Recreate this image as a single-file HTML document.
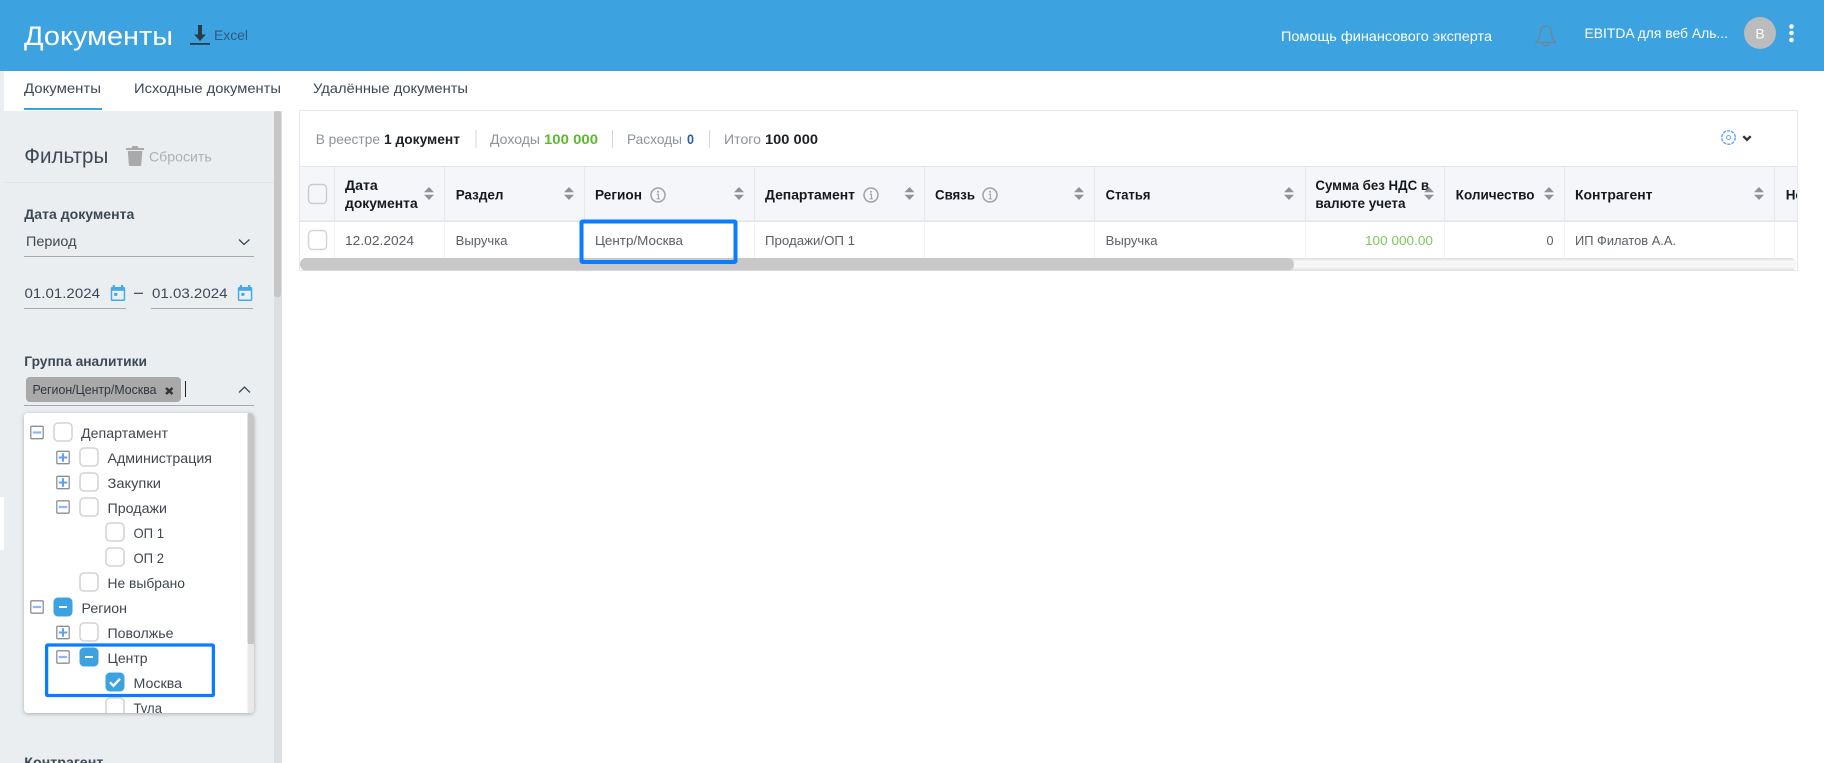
<!DOCTYPE html>
<html lang="ru">
<head>
<meta charset="utf-8">
<title>Документы</title>
<style>
html,body{margin:0;padding:0;width:1824px;height:763px;overflow:hidden;background:#fff}
svg{display:block}
text{font-family:"Liberation Sans",sans-serif;white-space:pre}
.t14{font-size:14px;fill:#3d4855}
.m{font-size:14px;fill:#3d4855;font-weight:700}
.h{font-size:13.5px;fill:#15181c;font-weight:700}
.c{font-size:13px;fill:#5a6068}
.s{font-size:14px;fill:#8d939a}
.b{font-size:14px;fill:#1c2126;font-weight:700}
.r{font-size:14px;fill:#3f4751}
</style>
</head>
<body>
<svg width="1824" height="763" viewBox="0 0 1824 763" xmlns="http://www.w3.org/2000/svg">
<defs>
<linearGradient id="trk" x1="0" y1="0" x2="0" y2="1"><stop offset="0" stop-color="#dcdcdc"/><stop offset=".25" stop-color="#f6f6f6"/><stop offset=".75" stop-color="#f6f6f6"/><stop offset="1" stop-color="#dcdcdc"/></linearGradient>
<g id="sort"><path d="M-5 -1.200 L0 -6.500 L5 -1.200 Z M-5 1.200 L0 6.500 L5 1.200 Z" fill="#8f929b"/></g>
<g id="info"><circle r="7" fill="none" stroke="#a0a2a6" stroke-width="1.500"/><circle cy="-3.300" r="1" fill="#a0a2a6"/><path d="M-1.200 -0.800H0.400V3.600M-1.300 3.800H1.800" fill="none" stroke="#a0a2a6" stroke-width="1.100"/></g>
<g id="cb"><rect x="-9" y="-9" width="18" height="18" rx="4" fill="#fff" stroke="#d4d4d4" stroke-width="1.600"/></g>
<g id="cbm"><rect x="-9.500" y="-9.500" width="19" height="19" rx="4.500" fill="#3ca3e0"/><path d="M-4 0H4" stroke="#fff" stroke-width="2"/></g>
<g id="cbc"><rect x="-9.500" y="-9.500" width="19" height="19" rx="4.500" fill="#3ca3e0"/><path d="M-5 0.300L-1.500 3.800L5 -3.200" fill="none" stroke="#fff" stroke-width="2.400"/></g>
<g id="exm"><rect x="-6.200" y="-6.200" width="12.400" height="12.400" rx="1" fill="#fff" stroke="#8a8f99" stroke-width="1.300"/><path d="M-4.200 0H4.200" stroke="#8ab6ff" stroke-width="2.200"/></g>
<g id="exp"><rect x="-6.200" y="-6.200" width="12.400" height="12.400" rx="1" fill="#fff" stroke="#8a8f99" stroke-width="1.300"/><path d="M-4.200 0H4.200M0 -4.200V4.200" stroke="#5f9dfb" stroke-width="2"/></g>
<g id="cal"><path d="M0 3.500a1.500 1.500 0 0 1 1.500-1.500H2V0h2.200v2h6.100V0h2.200v2h.5A1.500 1.500 0 0 1 14.500 3.500V14.500A1.500 1.500 0 0 1 13 16H1.500A1.500 1.500 0 0 1 0 14.500Z" fill="#4aa8e4"/><rect x="1.500" y="5.800" width="11.500" height="8.700" fill="#e6f1f8"/><rect x="3.600" y="8" width="3" height="2.800" fill="#3ca3e0"/></g>
<clipPath id="dd"><rect x="24" y="413" width="230" height="300" rx="4"/></clipPath>
<clipPath id="tb2"><rect x="300" y="111" width="1497" height="160"/></clipPath>
<filter id="sh" x="-10%" y="-10%" width="120%" height="120%"><feDropShadow dx="0" dy="1" stdDeviation="2" flood-color="#000" flood-opacity=".28"/></filter>
</defs>

<!-- header -->
<rect width="1824" height="71" fill="#3ca3e0"/>
<text x="24" y="45" font-size="27" fill="#fff" textLength="149" lengthAdjust="spacingAndGlyphs">Документы</text>
<path d="M198 25H202V34.500H205.800L200 41L194.200 34.500H198Z" fill="#2b3a47"/>
<rect x="190" y="43" width="20" height="1.800" fill="#2b3a47"/>
<text x="214" y="40" font-size="14" fill="#2f5a80" textLength="34" lengthAdjust="spacingAndGlyphs">Excel</text>
<text x="1281" y="41" font-size="14" fill="#fff" textLength="211" lengthAdjust="spacingAndGlyphs">Помощь финансового эксперта</text>
<path d="M1535.800 42.300C1539.500 39.500 1540.300 36 1540.300 33C1540.300 28.300 1542.500 25.800 1545.800 25.800C1549.100 25.800 1551.300 28.300 1551.300 33C1551.300 36 1552.100 39.500 1555.800 42.300ZM1542.700 42.800a3.100 3.100 0 0 0 6.200 0" fill="none" stroke="#76838f" stroke-width="1.200"/>
<text x="1584.500" y="38" font-size="14" fill="#fff" textLength="143.500" lengthAdjust="spacingAndGlyphs">EBITDA для веб Аль...</text>
<circle cx="1760" cy="33" r="16" fill="#bcbcbe"/>
<text x="1760" y="38.500" font-size="14" fill="#fff" text-anchor="middle">В</text>
<circle cx="1791.500" cy="26.500" r="2.300" fill="#fff"/><circle cx="1791.500" cy="33" r="2.300" fill="#fff"/><circle cx="1791.500" cy="40" r="2.300" fill="#fff"/>

<!-- tabs -->
<rect x="0" y="71" width="4" height="40" fill="#ebeef1"/>
<text x="24" y="93" class="t14" textLength="77" lengthAdjust="spacingAndGlyphs">Документы</text>
<text x="134" y="93" class="t14" textLength="147" lengthAdjust="spacingAndGlyphs">Исходные документы</text>
<text x="313" y="93" class="t14" textLength="155" lengthAdjust="spacingAndGlyphs">Удалённые документы</text>
<rect x="24" y="108" width="78" height="2" fill="#3ca3e0"/>

<!-- sidebar -->
<rect x="0" y="111" width="282" height="652" fill="#ebeef1"/>
<rect x="0" y="497" width="4" height="53" fill="#fff"/>
<rect x="274" y="111" width="8" height="652" fill="#dcdfe1"/>
<rect x="274" y="111" width="7" height="186" rx="3" fill="#c6c6c6"/>
<text x="24.300" y="163" font-size="21" fill="#3d4855" textLength="84" lengthAdjust="spacingAndGlyphs">Фильтры</text>
<path d="M126 148H131.500L132.500 146H137.500L138.500 148H144V150H126ZM127.800 151H142.300L141.300 164.500A1.500 1.500 0 0 1 139.800 166H130.300A1.500 1.500 0 0 1 128.800 164.500Z" fill="#a9a9a9"/>
<text x="149" y="161.500" font-size="14" fill="#acb0b4" textLength="62.700" lengthAdjust="spacingAndGlyphs">Сбросить</text>
<rect x="4" y="182" width="270" height="1" fill="#e2e5e8"/>
<text x="24.300" y="219" class="m" textLength="110" lengthAdjust="spacingAndGlyphs">Дата документа</text>
<text x="26" y="246" class="t14" textLength="50.500" lengthAdjust="spacingAndGlyphs">Период</text>
<path d="M239 239.500L244 244.500L249.500 239.500" fill="none" stroke="#3d4855" stroke-width="1.300"/>
<rect x="24" y="256" width="230" height="1" fill="#a8a9ab"/>
<text x="24.500" y="298" class="t14" textLength="75.500" lengthAdjust="spacingAndGlyphs">01.01.2024</text>
<use href="#cal" x="110.700" y="285"/>
<rect x="134" y="292.700" width="9" height="1.200" fill="#3d4855"/>
<text x="152" y="298" class="t14" textLength="75.500" lengthAdjust="spacingAndGlyphs">01.03.2024</text>
<use href="#cal" x="237.800" y="285"/>
<rect x="24" y="308" width="102" height="1" fill="#a8a9ab"/>
<rect x="151" y="308" width="102" height="1" fill="#a8a9ab"/>
<text x="24.300" y="366" class="m" textLength="122.700" lengthAdjust="spacingAndGlyphs">Группа аналитики</text>
<rect x="26" y="377" width="155" height="25" rx="4" fill="#a9a9a9"/>
<text x="32.500" y="394" font-size="12.500" fill="#2f3740" textLength="124" lengthAdjust="spacingAndGlyphs">Регион/Центр/Москва</text>
<path d="M166 388L172.500 394M172.500 388L166 394" stroke="#333" stroke-width="2.500"/>
<rect x="185" y="381" width="1" height="16" fill="#222"/>
<path d="M239 392.500L244.500 387L250 392.500" fill="none" stroke="#3d4855" stroke-width="1.300"/>
<rect x="24" y="405" width="230" height="1" fill="#a8a9ab"/>

<!-- dropdown -->
<rect x="24" y="413" width="230" height="300" rx="4" fill="#fff" filter="url(#sh)"/>
<g clip-path="url(#dd)">
<rect x="247.500" y="413" width="7" height="300" fill="#e9e9e9"/>
<rect x="247.500" y="413" width="7" height="231" rx="2" fill="#c6c6c6"/>
<use href="#exm" x="37" y="432.500"/><use href="#cb" x="63" y="432"/>
<text x="81" y="438" class="r" textLength="87" lengthAdjust="spacingAndGlyphs">Департамент</text>
<use href="#exp" x="63" y="457.500"/><use href="#cb" x="89" y="457"/>
<text x="107.500" y="463" class="r" textLength="104.500" lengthAdjust="spacingAndGlyphs">Администрация</text>
<use href="#exp" x="63" y="482.500"/><use href="#cb" x="89" y="482"/>
<text x="107.500" y="488" class="r" textLength="53.500" lengthAdjust="spacingAndGlyphs">Закупки</text>
<use href="#exm" x="63" y="507"/><use href="#cb" x="89" y="507"/>
<text x="107.500" y="513" class="r" textLength="59.500" lengthAdjust="spacingAndGlyphs">Продажи</text>
<use href="#cb" x="115" y="532"/>
<text x="133.500" y="538" class="r" textLength="30.500" lengthAdjust="spacingAndGlyphs">ОП 1</text>
<use href="#cb" x="115" y="557"/>
<text x="133.500" y="563" class="r" textLength="30.500" lengthAdjust="spacingAndGlyphs">ОП 2</text>
<use href="#cb" x="89" y="582"/>
<text x="107.500" y="588" class="r" textLength="77.500" lengthAdjust="spacingAndGlyphs">Не выбрано</text>
<use href="#exm" x="37" y="607"/><use href="#cbm" x="63" y="607"/>
<text x="81.500" y="613" class="r" textLength="45.500" lengthAdjust="spacingAndGlyphs">Регион</text>
<use href="#exp" x="63" y="632.500"/><use href="#cb" x="89" y="632"/>
<text x="107.500" y="638" class="r" textLength="66" lengthAdjust="spacingAndGlyphs">Поволжье</text>
<use href="#exm" x="63" y="657"/><use href="#cbm" x="89" y="657"/>
<text x="107.500" y="663" class="r" textLength="40" lengthAdjust="spacingAndGlyphs">Центр</text>
<use href="#cbc" x="115" y="682"/>
<text x="133.500" y="688" class="r" textLength="48.500" lengthAdjust="spacingAndGlyphs">Москва</text>
<use href="#cb" x="115" y="707"/>
<text x="133.500" y="713" class="r" textLength="28.500" lengthAdjust="spacingAndGlyphs">Тула</text>
</g>
<rect x="46.600" y="645" width="166.800" height="50.500" rx="1" fill="none" stroke="#0a7cff" stroke-width="3.300"/>
<text x="24.300" y="767" class="m" textLength="79" lengthAdjust="spacingAndGlyphs">Контрагент</text>

<!-- registry -->
<rect x="299.500" y="110.500" width="1498" height="160" fill="#fff" stroke="#e5e7ea"/>
<text x="315.700" y="144" class="s" textLength="64.300" lengthAdjust="spacingAndGlyphs">В реестре</text>
<text x="384" y="144" class="b" textLength="76" lengthAdjust="spacingAndGlyphs">1 документ</text>
<rect x="475.500" y="130" width="1" height="18" fill="#d5d7da"/>
<text x="490" y="144" class="s" textLength="50" lengthAdjust="spacingAndGlyphs">Доходы</text>
<text x="544" y="144" font-size="14" font-weight="700" fill="#5cb82e" textLength="54" lengthAdjust="spacingAndGlyphs">100 000</text>
<rect x="612" y="130" width="1" height="18" fill="#d5d7da"/>
<text x="627" y="144" class="s" textLength="55" lengthAdjust="spacingAndGlyphs">Расходы</text>
<text x="687" y="144" font-size="14" font-weight="700" fill="#2c5da8" textLength="7" lengthAdjust="spacingAndGlyphs">0</text>
<rect x="709" y="130" width="1" height="18" fill="#d5d7da"/>
<text x="724" y="144" class="s" textLength="37" lengthAdjust="spacingAndGlyphs">Итого</text>
<text x="765" y="144" class="b" textLength="53" lengthAdjust="spacingAndGlyphs">100 000</text>

<circle cx="1728.500" cy="137.500" r="6.800" fill="none" stroke="#6aa6ff" stroke-width="1.500" stroke-dasharray="3.300 1"/>
<circle cx="1728.500" cy="137.500" r="2" fill="none" stroke="#6aa6ff" stroke-width="1.100"/>
<path d="M1743.300 136.200L1747 139.800L1750.700 136.200" fill="none" stroke="#333" stroke-width="2.400"/>

<!-- table header -->
<rect x="300" y="166" width="1497" height="55" fill="#f4f6fa"/>
<rect x="300" y="166" width="1497" height="1" fill="#e2e4e9"/>
<rect x="300" y="220.500" width="1497" height="1.500" fill="#e2e4e9"/>
<g fill="#e6e8ee">
<rect x="334" y="167" width="1" height="54"/><rect x="444" y="167" width="1" height="54"/><rect x="584" y="167" width="1" height="54"/><rect x="754" y="167" width="1" height="54"/><rect x="924" y="167" width="1" height="54"/><rect x="1094" y="167" width="1" height="54"/><rect x="1305" y="167" width="1" height="54"/><rect x="1444" y="167" width="1" height="54"/><rect x="1564" y="167" width="1" height="54"/><rect x="1774" y="167" width="1" height="54"/>
</g>
<g fill="#f0f1f3">
<rect x="334" y="223" width="1" height="35"/><rect x="444" y="223" width="1" height="35"/><rect x="754" y="223" width="1" height="35"/><rect x="924" y="223" width="1" height="35"/><rect x="1094" y="223" width="1" height="35"/><rect x="1305" y="223" width="1" height="35"/><rect x="1444" y="223" width="1" height="35"/><rect x="1564" y="223" width="1" height="35"/><rect x="1774" y="223" width="1" height="35"/>
</g>
<rect x="308.500" y="184.500" width="18" height="19" rx="4" fill="#f4f6fa" stroke="#c9cbce" stroke-width="1.400"/>
<text x="345" y="189.800" class="h" textLength="32.800" lengthAdjust="spacingAndGlyphs">Дата</text>
<text x="345" y="207.800" class="h" textLength="72.700" lengthAdjust="spacingAndGlyphs">документа</text>
<text x="455.700" y="199.500" class="h" textLength="47.800" lengthAdjust="spacingAndGlyphs">Раздел</text>
<text x="595" y="199.500" class="h" textLength="47" lengthAdjust="spacingAndGlyphs">Регион</text>
<text x="765" y="199.500" class="h" textLength="90" lengthAdjust="spacingAndGlyphs">Департамент</text>
<text x="935" y="199.500" class="h" textLength="40" lengthAdjust="spacingAndGlyphs">Связь</text>
<text x="1105.600" y="199.500" class="h" textLength="44.800" lengthAdjust="spacingAndGlyphs">Статья</text>
<text x="1315.400" y="189.800" class="h" textLength="113.600" lengthAdjust="spacingAndGlyphs">Сумма без НДС в</text>
<text x="1315.400" y="207.800" class="h" textLength="90.200" lengthAdjust="spacingAndGlyphs">валюте учета</text>
<text x="1455.700" y="199.500" class="h" textLength="78.900" lengthAdjust="spacingAndGlyphs">Количество</text>
<text x="1575" y="199.500" class="h" textLength="77.500" lengthAdjust="spacingAndGlyphs">Контрагент</text>
<g clip-path="url(#tb2)"><text x="1785.700" y="199.500" class="h">Номер</text></g>
<use href="#sort" x="429" y="193.500"/><use href="#sort" x="569" y="193.500"/><use href="#sort" x="739" y="193.500"/><use href="#sort" x="909.500" y="193.500"/><use href="#sort" x="1079" y="193.500"/><use href="#sort" x="1289" y="193.500"/><use href="#sort" x="1429" y="193.500"/><use href="#sort" x="1549" y="193.500"/><use href="#sort" x="1759" y="193.500"/>
<use href="#info" x="658" y="195"/><use href="#info" x="871" y="195"/><use href="#info" x="990" y="195"/>

<!-- table row -->
<rect x="308.500" y="230.500" width="18" height="19" rx="4" fill="#fff" stroke="#d4d4d4" stroke-width="1.400"/>
<text x="345" y="245" class="c" textLength="69" lengthAdjust="spacingAndGlyphs">12.02.2024</text>
<text x="455.700" y="245" class="c" textLength="51.800" lengthAdjust="spacingAndGlyphs">Выручка</text>
<text x="595" y="245" class="c" textLength="88" lengthAdjust="spacingAndGlyphs">Центр/Москва</text>
<text x="765" y="245" class="c" textLength="90" lengthAdjust="spacingAndGlyphs">Продажи/ОП 1</text>
<text x="1105.600" y="245" class="c" textLength="51.900" lengthAdjust="spacingAndGlyphs">Выручка</text>
<text x="1365" y="245" font-size="13" fill="#7dc858" textLength="68" lengthAdjust="spacingAndGlyphs">100 000.00</text>
<text x="1546.500" y="245" class="c" textLength="7" lengthAdjust="spacingAndGlyphs">0</text>
<text x="1575" y="245" class="c" textLength="101" lengthAdjust="spacingAndGlyphs">ИП Филатов А.А.</text>

<!-- table scrollbar -->
<rect x="300" y="258" width="1496.500" height="12.500" rx="6" fill="url(#trk)"/>
<rect x="300" y="258" width="994" height="12.500" rx="6" fill="#c8c8c8"/>

<!-- highlight -->
<rect x="581.500" y="221.500" width="154" height="40.500" rx="1" fill="none" stroke="#0a7cff" stroke-width="4"/>
</svg>
</body>
</html>
